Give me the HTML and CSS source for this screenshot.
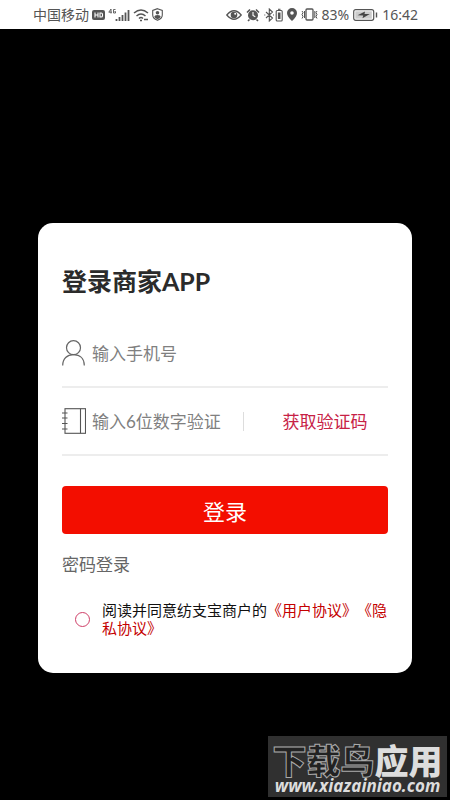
FILE: index.html
```html
<!DOCTYPE html>
<html lang="zh-CN">
<head>
<meta charset="utf-8">
<meta name="viewport" content="width=device-width, initial-scale=1">
<title>登录商家APP</title>
<link rel="stylesheet" href="styles.css">
</head>
<body>
<header class="status">
  <div class="status-side">
    <span>中国移动</span>
    <svg width="13" height="12" viewBox="0 0 13 12"><rect y="1" width="13" height="10" rx="2" fill="#555"/><path d="M3 3.500v5M6 3.500v5M3 6h3M8 4v4h1.200q1.300 0 1.300-1.300v-1.400q0-1.300-1.300-1.300z" fill="none" stroke="#fff" stroke-width="1.100"/></svg>
    <svg class="signal" width="22" height="14" viewBox="0 0 22 14" fill="none" stroke="#555"><path d="M3 5.500V1L.8 4.200H4M7.500 1.500H5.500v3.500h2V3.500H6.500" stroke-width=".9"/><path d="M8.500 11v2M11.500 9v4M14.500 7v6M17.500 4.500V13M20.500 2v11" stroke-width="1.800"/></svg>
    <svg width="16" height="14" viewBox="0 0 16 14" fill="none" stroke="#555" stroke-width="1.500"><path d="M1 5q7-6 14 0M3.500 8q4.500-4 9 0M6 10.500q2-2 4 0"/><path d="M7 12.500h2M11 11.500h4" stroke-width="1.600"/></svg>
    <svg class="shield" width="11" height="13" viewBox="0 0 11 13"><path d="M5.500.7L10.300 2.500v4.500q0 3.500-4.800 5.300Q.7 10.500.7 7V2.500z" fill="none" stroke="#555" stroke-width="1.100"/><circle cx="5.500" cy="4.800" r="1.800" fill="#555"/><path d="M2.300 9q.2-2 3.200-2t3.200 2q-1 1.500-3.200 2.200Q3.300 10.500 2.300 9z" fill="#555"/></svg>
  </div>
  <div class="status-side status-right">
    <svg width="16" height="12" viewBox="0 0 16 12"><path d="M.8 6Q8-2.500 15.200 6 8 14.500.8 6z" fill="none" stroke="#555" stroke-width="1.300"/><circle cx="8" cy="6" r="3.300" fill="#555"/><circle cx="9.200" cy="4.800" r="1" fill="#fff"/></svg>
    <svg class="alarm" width="14" height="14" viewBox="0 0 14 14"><circle cx="7" cy="7.300" r="5" fill="#555"/><path d="M1 4.500L4 1.500M13 4.500L10 1.500M3.500 11.500L2 13M10.500 11.500L12 13" stroke="#555" stroke-width="1.600"/><path d="M7 4v3.500l2.300 1.300" fill="none" stroke="#fff" stroke-width="1.100"/></svg>
    <svg class="bluetooth" width="19" height="14" viewBox="0 0 19 14" fill="none" stroke="#555" stroke-width="1.100"><path d="M2 4l6.500 6L5.300 13V1l3.200 3L2 10M.3 7h1M9 7h1"/><rect x="12.200" y="2.500" width="6" height="10.500" rx="1"/><path d="M14 1.300h2.500"/><path d="M15.200 4.500v6.500" stroke-width="2.600"/></svg>
    <svg class="pin" width="10" height="13" viewBox="0 0 10 13"><path fill-rule="evenodd" d="M5 0a5 5 0 0 1 5 5q0 3.500-5 8Q0 8.500 0 5a5 5 0 0 1 5-5zm0 3.200a1.800 1.800 0 1 0 0 3.600 1.800 1.800 0 0 0 0-3.600z" fill="#555"/></svg>
    <svg width="17" height="13" viewBox="0 0 17 13" fill="none" stroke="#555" stroke-width="1.300"><rect x="5" y="1" width="7" height="11" rx="1"/><path d="M1 3l1 1.500L1 6.500l1 2-1 2M3.500 3v7M13.800 3v7M16 3l-1 1.500 1 2-1 2 1 2" stroke-width="1"/></svg>
    <span>83%</span>
    <svg class="battery" width="25" height="12" viewBox="0 0 25 12"><rect x=".7" y=".7" width="20" height="10.600" rx="2" fill="none" stroke="#555" stroke-width="1.200"/><rect x="2.300" y="2.300" width="16.500" height="7.400" fill="#ccc"/><path d="M4.500 6.300L12 2.500l-.5 2.500h5.300L9.500 9.300l.7-2.800z" fill="#444"/><path d="M23.500 3.500v5" stroke="#555" stroke-width="1.400"/></svg>
    <span>16:42</span>
  </div>
</header>

<main class="card">
  <h1 class="title">登录商家APP</h1>
  <form class="form">
    <div class="field">
      <label class="icon" for="phone" aria-label="手机号"><svg width="24" height="26" viewBox="0 0 24 26" fill="none" stroke="#666" stroke-width="1.200"><circle cx="11.500" cy="7.700" r="7"/><path d="M.7 25.500C.7 18.500 5 14.700 11.500 14.700S22.300 18.500 22.300 25.500"/></svg></label>
      <input class="input" id="phone" type="tel" placeholder="输入手机号">
    </div>
    <div class="field">
      <label class="icon" for="code" aria-label="验证码"><svg width="24" height="26" viewBox="0 0 24 26" fill="none" stroke="#555" stroke-width="1.100"><rect x="3" y=".7" width="20.500" height="24.600"/><path d="M18.500.7v24.600M0 5h5.500M0 10h5.500M0 15.500h5.500M0 21h5.500"/></svg></label>
      <input class="input" id="code" type="text" inputmode="numeric" placeholder="输入6位数字验证">
      <button class="get-code" type="button">获取验证码</button>
    </div>
    <button class="submit" type="submit">登录</button>
    <a class="password-login" href="#password">密码登录</a>
    <div class="agreement">
      <input class="agree-radio" id="agree" type="radio">
      <label for="agree">阅读并同意纺支宝商户的<a href="#terms">《用户协议》</a><a href="#privacy">《隐私协议》</a></label>
    </div>
  </form>
</main>

<aside class="watermark">
  <div class="watermark-name"><span class="outlined">下载鸟</span>应用</div>
  <div class="watermark-url">www.xiazainiao.com</div>
</aside>
</body>
</html>
```
FILE: styles.css
```css
* {
  box-sizing: border-box;
}

body {
  position: relative;
  min-height: 100vh;
  margin: 0;
  background: #000;
  color: #111;
  font-family: Lato, "Noto Sans CJK SC", sans-serif;
  text-spacing-trim: space-all;
}

svg {
  display: block;
  flex: none;
}

a {
  text-decoration: none;
}

button,
input {
  margin: 0;
  padding: 0;
  border: 0;
  background: none;
  font: inherit;
}

.status {
  display: flex;
  justify-content: space-between;
  align-items: center;
  height: 29px;
  padding: 0 32px 0 33px;
  background: #fff;
  color: #555;
  font-family: "Noto Sans", "Noto Sans CJK SC", sans-serif;
  font-size: 14px;
  line-height: 20px;
}

.status-side {
  display: flex;
  align-items: center;
  gap: 3px;
}

.status-right {
  gap: 4px;
}

.card {
  margin: 194px 38px 0;
  padding: 40px 24px 36px;
  border-radius: 15px;
  background: #fff;
}

.title {
  margin: 0 0 21px;
  color: #2b2b2b;
  font-size: 25px;
  font-weight: 700;
  line-height: 36px;
}

.form {
  display: flex;
  flex-direction: column;
}

.field {
  display: flex;
  align-items: center;
  height: 68px;
  border-bottom: 2px solid #ededed;
}

.icon {
  flex: none;
  margin-right: 6px;
}

.input {
  flex: 1;
  min-width: 0;
  height: 32px;
  outline: none;
  color: #333;
  font-size: 17px;
}

#code {
  flex: none;
  width: 132px;
}

.input::placeholder {
  color: #808080;
  opacity: 1;
}

.get-code {
  flex: 1;
  height: 19px;
  margin-left: 19px;
  padding-left: 18px;
  border-left: 1px solid #ddd;
  color: #c72145;
  font-size: 17px;
  line-height: 19px;
  white-space: nowrap;
}

.submit {
  height: 48px;
  margin-top: 30px;
  border-radius: 4px;
  background: #f30e00;
  color: #fff;
  font-size: 22px;
}

.password-login {
  align-self: flex-start;
  margin-top: 18px;
  color: #666;
  font-size: 17px;
  line-height: 25px;
}

.agreement {
  display: flex;
  align-items: center;
  gap: 12px;
  margin-top: 24px;
  padding-left: 13px;
  font-size: 15px;
  line-height: 18px;
}

.agreement a {
  color: #c40000;
}

.agree-radio {
  flex: none;
  width: 15px;
  height: 15px;
  border: 1px solid #cf3f68;
  border-radius: 50%;
  appearance: none;
}

.agree-radio:checked {
  background: #cf3f68;
}

.watermark {
  position: absolute;
  right: 3px;
  bottom: 3px;
  width: 179px;
  height: 61px;
  padding-top: 7px;
  background: #303030;
  color: #ddd;
  text-align: center;
  white-space: nowrap;
}

.watermark-name {
  font-family: "Noto Sans CJK SC", sans-serif;
  font-size: 34px;
  font-weight: 900;
  line-height: 34px;
}

.outlined {
  color: #222;
  -webkit-text-stroke: 1px #aaa;
}

.watermark-url {
  font-family: "Noto Sans", sans-serif;
  font-size: 17px;
  font-style: italic;
  font-weight: 700;
  line-height: 18px;
}
```
